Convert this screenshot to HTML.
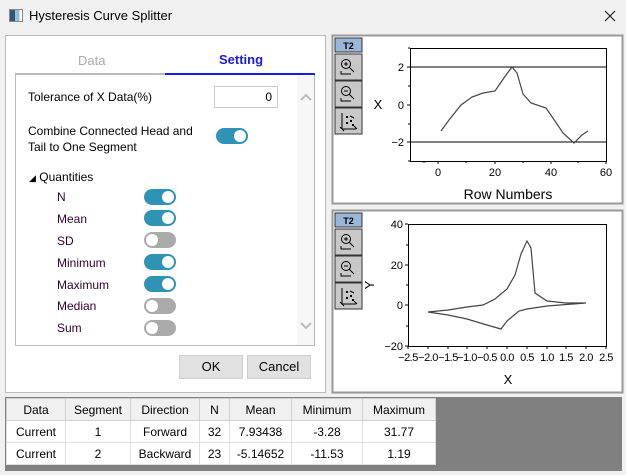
<!DOCTYPE html>
<html><head><meta charset="utf-8"><style>
*{margin:0;padding:0;box-sizing:border-box}
body{width:626px;height:475px;background:#f0f0f0;font-family:"Liberation Sans",sans-serif;font-size:12px;color:#000;position:relative;overflow:hidden}
.a{position:absolute}
.tg{position:absolute;width:32px;height:16px;border-radius:8px;background:#2e93b4}
.tg::after{content:"";position:absolute;top:2px;right:2px;width:12px;height:12px;border-radius:50%;background:#fff}
.tg.off{background:#aaa}
.tg.off::after{right:auto;left:2px}
.lb{position:absolute;left:57px;font-size:12px;color:#300030}
.btn{position:absolute;background:#e1e1e1;border:1px solid #cfcfcf;text-align:center;line-height:22px;font-size:13px}
table{border-collapse:collapse;position:absolute;left:6px;top:398px;background:#fff;table-layout:fixed}
td{border:1px solid #e0e0e0;text-align:center;font-size:12px;height:22px;padding:0;white-space:nowrap}
tr.h td{background:#f0f0f0;border-color:#d0d0d0}
</style></head><body>
<div class="a" style="left:0;top:0;width:626px;height:32px;background:#f0f0f0"></div>
<div class="a" style="left:9px;top:9px;width:14px;height:13px;border:1px solid #888;background:linear-gradient(90deg,#357 0 40%,#9bd 40% 80%,#fff 80%)"></div>
<div class="a" style="left:29px;top:8px;font-size:13px">Hysteresis Curve Splitter</div>
<svg class="a" style="left:604px;top:10px" width="12" height="12"><path d="M1 1L11 11M11 1L1 11" stroke="#222" stroke-width="1.2"/></svg>

<div class="a" style="left:5px;top:35px;width:321px;height:358px;background:#fff;border:1px solid #bbb"></div>
<div class="a" style="left:78px;top:53px;color:#aaa;font-size:13px">Data</div>
<div class="a" style="left:219px;top:52px;color:#1a1ae6;font-size:13px;font-weight:bold">Setting</div>
<div class="a" style="left:15px;top:73px;width:150px;height:2px;background:#bbb"></div>
<div class="a" style="left:165px;top:73px;width:150px;height:2px;background:#1a1ae6"></div>
<div class="a" style="left:15px;top:75px;width:300px;height:271px;border:1px solid #bbb;border-top:none"></div>
<div class="a" style="left:297px;top:76px;width:17px;height:269px;background:#f7f7f7"></div>
<svg class="a" style="left:299px;top:92px" width="14" height="10"><path d="M2 8L7 3L12 8" fill="none" stroke="#bbb" stroke-width="2"/></svg>
<svg class="a" style="left:299px;top:321px" width="14" height="10"><path d="M2 2L7 7L12 2" fill="none" stroke="#bbb" stroke-width="2"/></svg>
<div class="a" style="left:28px;top:90px;font-size:12px">Tolerance of X Data(%)</div>
<div class="a" style="left:214px;top:86px;width:64px;height:22px;border:1px solid #ccc;text-align:right;padding-right:5px;line-height:20px">0</div>
<div class="a" style="left:28px;top:123px;font-size:12px;line-height:16px">Combine Connected Head and<br>Tail to One Segment</div>
<div class="tg" style="left:216px;top:128px"></div>
<div class="a" style="left:29px;top:170px;font-size:12px"><span style="font-size:9px">◢</span> Quantities</div>
<div class="lb" style="top:190px">N</div><div class="tg" style="left:144px;top:189px"></div>
<div class="lb" style="top:212px">Mean</div><div class="tg" style="left:144px;top:210px"></div>
<div class="lb" style="top:234px">SD</div><div class="tg off" style="left:144px;top:232px"></div>
<div class="lb" style="top:256px">Minimum</div><div class="tg" style="left:144px;top:254px"></div>
<div class="lb" style="top:278px">Maximum</div><div class="tg" style="left:144px;top:276px"></div>
<div class="lb" style="top:299px">Median</div><div class="tg off" style="left:144px;top:298px"></div>
<div class="lb" style="top:321px">Sum</div><div class="tg off" style="left:144px;top:320px"></div>
<div class="btn" style="left:179px;top:355px;width:64px;height:24px">OK</div>
<div class="btn" style="left:247px;top:355px;width:64px;height:24px">Cancel</div>

<svg class="a" style="left:0;top:0" width="626" height="475" font-family="Liberation Sans,sans-serif">
<rect x="332.5" y="35.5" width="290" height="168" fill="#fff" stroke="#999" stroke-width="2"/>
<rect x="332.5" y="210.5" width="290" height="182" fill="#fff" stroke="#999" stroke-width="2"/>
<g id="tb">
<rect x="335" y="38" width="27" height="14" fill="#9ab6d8" stroke="#333"/>
<text x="348.5" y="49" font-size="9" font-weight="bold" text-anchor="middle">T2</text>
<rect x="335" y="54" width="27" height="26" fill="#c8c8c8" stroke="#333"/>
<rect x="335" y="81" width="27" height="26" fill="#c8c8c8" stroke="#333"/>
<rect x="335" y="108" width="27" height="26" fill="#c8c8c8" stroke="#333"/>
<g fill="none" stroke="#000" stroke-width="1">
<circle cx="346" cy="64" r="4.5"/><path d="M349 67l5 5M344 64h4M346 62v4M341 71v3h10"/>
<circle cx="346" cy="91" r="4.5"/><path d="M349 94l5 5M344 91h4M341 98v3h10"/>
<path d="M342 113v16h14M340 127l4 4M350 116l4 2M354 126l3 3"/>
</g>
<g fill="#000"><rect x="346" y="116" width="2" height="2"/><rect x="350" y="120" width="2" height="2"/><rect x="346" y="122" width="2" height="2"/><rect x="352" y="124" width="2" height="2"/></g>
</g>
<use href="#tb" y="175"/>
<rect x="410.5" y="48.5" width="196" height="113" fill="none" stroke="#000"/>
<path d="M410 67H606M410 142H606" stroke="#000"/>
<g stroke="#000"><path d="M410 67h-3M410 105h-3M410 142h-3M410 86h-2M410 124h-2M410 48h-2M410 161h-2M438 161v3M495 161v3M551 161v3M606 161v3M424 161v2M466 161v2M523 161v2M578 161v2"/></g>
<g font-size="11" text-anchor="end"><text x="404" y="71">2</text><text x="404" y="109">0</text><text x="404" y="146">−2</text></g>
<g font-size="11" text-anchor="middle"><text x="438" y="176">0</text><text x="495" y="176">20</text><text x="551" y="176">40</text><text x="606" y="176">60</text></g>
<text x="508" y="199" font-size="14" text-anchor="middle">Row Numbers</text>
<text x="378" y="109" font-size="13" text-anchor="middle">X</text>
<polyline fill="none" stroke="#444" stroke-width="1.2" points="441,131 449,120 461,105 472,97 483,93 495,91 506,75 512,67 517,73 523,94 531,103 546,108 557,124 563,133 574,143 582,135 588,131"/>
<rect x="408.5" y="224.5" width="198" height="122" fill="none" stroke="#000"/>
<g stroke="#000"><path d="M408 224h-3M408 265h-3M408 305h-3M408 346h-3M408 245h-2M408 285h-2M408 326h-2M408 346v3M428 346v3M448 346v3M467 346v3M487 346v3M507 346v3M527 346v3M547 346v3M566 346v3M586 346v3M606 346v3"/></g>
<g font-size="11" text-anchor="end"><text x="403" y="228">40</text><text x="403" y="269">20</text><text x="403" y="309">0</text><text x="403" y="350">−20</text></g>
<g font-size="11" text-anchor="middle" letter-spacing="-0.5"><text x="408" y="361">−2.5</text><text x="428" y="361">−2.0</text><text x="448" y="361">−1.5</text><text x="467" y="361">−1.0</text><text x="487" y="361">−0.5</text><text x="507" y="361">0.0</text><text x="527" y="361">0.5</text><text x="547" y="361">1.0</text><text x="566" y="361">1.5</text><text x="586" y="361">2.0</text><text x="606" y="361">2.5</text></g>
<text x="508" y="384" font-size="13" text-anchor="middle">X</text>
<text x="374" y="285" font-size="13" text-anchor="middle" transform="rotate(-90 374 285)">Y</text>
<polyline fill="none" stroke="#444" stroke-width="1.2" points="428,312 448,310 467,307 483,305 495,299 507,289 515,275 521,254 527,241 531,248 535,293 547,301 566,303 586,303 547,306 527,309 519,311 507,321 501,329 487,325 467,319 448,315 428,312"/>
<rect x="5" y="397" width="617" height="74" fill="#808080"/>
</svg>
<table style="width:429px">
<colgroup><col style="width:59px"><col style="width:65px"><col style="width:69px"><col style="width:30px"><col style="width:62px"><col style="width:71px"><col style="width:73px"></colgroup>
<tr class="h"><td>Data</td><td>Segment</td><td>Direction</td><td>N</td><td>Mean</td><td>Minimum</td><td>Maximum</td></tr>
<tr><td>Current</td><td>1</td><td>Forward</td><td>32</td><td>7.93438</td><td>-3.28</td><td>31.77</td></tr>
<tr><td>Current</td><td>2</td><td>Backward</td><td>23</td><td>-5.14652</td><td>-11.53</td><td>1.19</td></tr>
</table>
</body></html>
